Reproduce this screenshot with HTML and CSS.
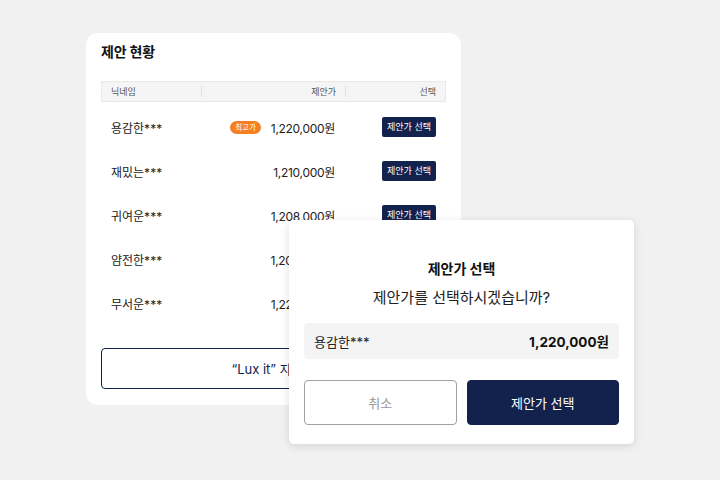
FILE: index.html
```html
<!DOCTYPE html>
<html lang="ko">
<head>
<meta charset="utf-8">
<link rel="stylesheet" href="styles.css">
</head>
<body>
<div class="stage">
  <section class="card">
    <h2 class="title">제안 현황</h2>
    <div class="thead">
      <div class="th c-name">닉네임</div>
      <div class="th c-price">제안가</div>
      <div class="th c-sel">선택</div>
    </div>
    <div class="row">
      <div class="c-name">용감한***</div>
      <div class="c-price"><span class="badge">최고가</span>1,220,000원</div>
      <div class="c-sel"><span class="pick">제안가 선택</span></div>
    </div>
    <div class="row">
      <div class="c-name">재밌는***</div>
      <div class="c-price">1,210,000원</div>
      <div class="c-sel"><span class="pick">제안가 선택</span></div>
    </div>
    <div class="row">
      <div class="c-name">귀여운***</div>
      <div class="c-price">1,208,000원</div>
      <div class="c-sel"><span class="pick">제안가 선택</span></div>
    </div>
    <div class="row">
      <div class="c-name">얌전한***</div>
      <div class="c-price">1,200,000원</div>
      <div class="c-sel"><span class="pick">제안가 선택</span></div>
    </div>
    <div class="row">
      <div class="c-name">무서운***</div>
      <div class="c-price">1,220,000원</div>
      <div class="c-sel"><span class="pick">제안가 선택</span></div>
    </div>
    <button class="outline">“Lux it” 자세히</button>
  </section>

  <div class="modal">
    <h3 class="m-title">제안가 선택</h3>
    <p class="m-sub">제안가를 선택하시겠습니까?</p>
    <div class="m-info">
      <span class="m-name">용감한***</span>
      <span class="m-price">1,220,000원</span>
    </div>
    <div class="m-actions">
      <button class="btn cancel">취소</button>
      <button class="btn confirm">제안가 선택</button>
    </div>
  </div>
</div>
</body>
</html>
```
FILE: styles.css
```css
* { box-sizing: border-box; }
html, body { margin: 0; padding: 0; }
body {
  width: 720px;
  height: 480px;
  background: #f1f1f1;
  font-family: Inter, "Noto Sans CJK KR", sans-serif;
  color: #222;
  overflow: hidden;
}
.stage {
  position: relative;
  width: 720px;
  height: 480px;
  padding: 33px 0 0 86px;
}
.card {
  width: 375px;
  background: #fff;
  border-radius: 12px;
  padding: 9px 15px 16px 15px;
}
.title {
  margin: 0;
  font-size: 14px;
  font-weight: 700;
  line-height: 20px;
  color: #111;
  letter-spacing: -0.2px;
}
.thead {
  margin-top: 19px;
  height: 21px;
  display: grid;
  grid-template-columns: 100px 144px 1fr;
  align-items: center;
  background: #f5f5f5;
  border: 1px solid #e9e9e9;
  font-size: 9px;
  color: #555;
}
.th { height: 11px; line-height: 11px; }
.th.c-name { padding-left: 9px; border-right: 1px solid #e3e3e3; }
.th.c-price { text-align: right; padding-right: 9px; border-right: 1px solid #e3e3e3; }
.th.c-sel { text-align: right; padding-right: 9px; }
.row {
  height: 44px;
  display: grid;
  grid-template-columns: 100px 134px 1fr;
  align-items: center;
  font-size: 12px;
  color: #222;
}
.thead + .row { margin-top: 3px; }
.row .c-name { padding-left: 10px; }
.row .c-price {
  display: flex;
  justify-content: flex-end;
  align-items: center;
  font-size: 12px;
  letter-spacing: -0.3px;
}
.row .c-sel { text-align: right; padding-right: 10px; }
.badge {
  display: inline-block;
  background: #f57f20;
  color: #fff;
  font-size: 7.5px;
  letter-spacing: 0;
  line-height: 13px;
  height: 13px;
  padding: 0 5px;
  border-radius: 7px;
  margin-right: 10px;
}
.pick {
  display: inline-block;
  background: #13224d;
  color: #fff;
  font-size: 9px;
  line-height: 20px;
  height: 20px;
  padding: 0 5px;
  border-radius: 2px;
}
.outline {
  margin-top: 23px;
  width: 100%;
  height: 41px;
  background: #fff;
  border: 1px solid #13224d;
  border-radius: 4px;
  font-family: inherit;
  font-size: 13px;
  color: #13224d;
}
.modal {
  position: absolute;
  left: 289px;
  top: 220px;
  width: 345px;
  height: 224px;
  background: #fff;
  border-radius: 5px;
  box-shadow: 0 2px 10px rgba(0,0,0,0.12);
  padding: 39px 15px 0 15px;
}
.m-title {
  margin: 0;
  text-align: center;
  font-size: 14px;
  font-weight: 700;
  line-height: 20px;
  color: #111;
}
.m-sub {
  margin: 9px 0 0;
  text-align: center;
  font-size: 15px;
  line-height: 20px;
  color: #222;
}
.m-info {
  margin-top: 15px;
  height: 36px;
  background: #f4f4f4;
  border-radius: 4px;
  display: flex;
  justify-content: space-between;
  align-items: center;
  padding: 0 10px;
}
.m-name { font-size: 13px; color: #222; }
.m-price { font-size: 13.5px; font-weight: 700; color: #111; }
.m-actions {
  margin-top: 21px;
  display: grid;
  grid-template-columns: 1fr 1fr;
  gap: 10px;
}
.btn {
  height: 45px;
  border-radius: 4px;
  font-family: inherit;
  font-size: 13px;
}
.cancel {
  background: #fff;
  border: 1px solid #a0a0a0;
  color: #999;
}
.confirm {
  background: #13224d;
  border: 1px solid #13224d;
  color: #fff;
}
```
